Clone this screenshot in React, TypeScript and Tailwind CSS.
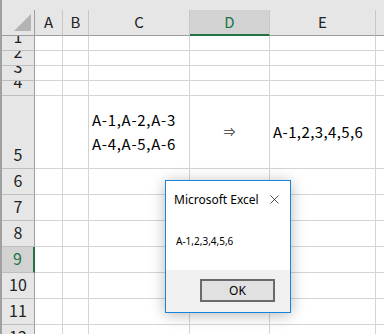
import { X } from "lucide-react";

const jp = { fontFamily: '"Noto Sans CJK JP", "Noto Sans", sans-serif' };

const cols = [
  { key: "A", w: "w-[28px]" },
  { key: "B", w: "w-[26px]" },
  { key: "C", w: "w-[101px]" },
  { key: "D", w: "w-[80px]" },
  { key: "E", w: "w-[106px]" },
  { key: "F", w: "w-[60px]" },
];

const rows = [
  { n: 1, h: "h-[15px]" },
  { n: 2, h: "h-[15px]" },
  { n: 3, h: "h-[15px]" },
  { n: 4, h: "h-[15px]" },
  { n: 5, h: "h-[73px]" },
  { n: 6, h: "h-[26px]" },
  { n: 7, h: "h-[26px]" },
  { n: 8, h: "h-[26px]" },
  { n: 9, h: "h-[26px]" },
  { n: 10, h: "h-[26px]" },
  { n: 11, h: "h-[26px]" },
  { n: 12, h: "h-[26px]" },
];

function CellContent({ row, col }: { row: number; col: string }) {
  if (row !== 5) return null;
  if (col === "C")
    return (
      <div className="flex h-full flex-col justify-center pl-[3px] text-[15px] leading-[24px] tracking-[0.7px] text-black">
        <span>A-1,A-2,A-3</span>
        <span>A-4,A-5,A-6</span>
      </div>
    );
  if (col === "D")
    return (
      <div className="flex h-full items-center justify-center text-[12px] text-[#333]">⇒</div>
    );
  if (col === "E")
    return (
      <div className="flex h-full items-center pl-[3px] text-[15px] tracking-[0.4px] text-black">
        A-1,2,3,4,5,6
      </div>
    );
  return null;
}

function MsgBox() {
  return (
    <div
      className="absolute left-[163px] top-[180px] flex h-[133px] w-[126px] flex-col border border-[#1883d7] bg-white shadow-[0_2px_14px_rgba(0,0,0,0.28)]"
      style={{ fontFamily: '"Noto Sans", sans-serif' }}
    >
      <div className="flex h-[30px] items-end justify-between pl-[8px] pr-[8px] pb-[3px]">
        <span className="text-[12px] leading-[16px] text-black">Microsoft Excel</span>
        <X className="mb-[1px] h-[15px] w-[15px] text-black" strokeWidth={1.1} />
      </div>
      <div className="flex flex-1 items-center pl-[10px] pt-[1px] text-[10px] text-black">
        A-1,2,3,4,5,6
      </div>
      <div className="flex h-[42px] items-start justify-end bg-[#f0f0f0] pr-[15px] pt-[9px]">
        <button className="flex h-[23px] w-[75px] items-center justify-center border-2 border-[#6a6a6a] bg-[#e1e1e1] text-[12px] text-black">
          OK
        </button>
      </div>
    </div>
  );
}

export default function App() {
  return (
    <div className="relative h-[334px] w-[384px] overflow-hidden border-l-2 border-[#a0a0a0] bg-[#e6e6e6]" style={jp}>
      <div className="h-[10px]" />
      {/* column headers */}
      <div className="flex h-[26px]">
        <div className="relative w-[33px] shrink-0 border-b border-r border-[#9e9e9e]">
          <svg className="absolute left-0 top-0" width="33" height="25" viewBox="0 0 33 25">
            <polygon points="29,4 29,21 12,21" fill="#b4b4b4" />
          </svg>
        </div>
        {cols.map((c) => (
          <div
            key={c.key}
            className={`${c.w} flex shrink-0 items-center justify-center border-r text-[15px] ${
              c.key === "D"
                ? "border-b-2 border-r-[#c8c8c8] border-b-[#217346] bg-[#d2d2d2] text-[#217346]"
                : "border-b border-r-[#c8c8c8] border-b-[#9e9e9e] text-[#222]"
            }`}
          >
            {c.key}
          </div>
        ))}
      </div>
      {/* rows */}
      {rows.map((r) => (
        <div key={r.n} className={`${r.h} flex`}>
          <div
            className={`flex w-[33px] shrink-0 items-end justify-center overflow-hidden border-b border-b-[#bebebe] pb-[5px] text-[16px] leading-[17px] ${
              r.n === 9
                ? "border-r-2 border-r-[#217346] bg-[#d2d2d2] text-[#217346]"
                : "border-r border-r-[#9e9e9e] text-[#222]"
            }`}
          >
            {r.n}
          </div>
          {cols.map((c) => (
            <div key={c.key} className={`${c.w} shrink-0 border-b border-r border-[#d4d4d4] bg-white`}>
              <CellContent row={r.n} col={c.key} />
            </div>
          ))}
        </div>
      ))}
      <MsgBox />
    </div>
  );
}
